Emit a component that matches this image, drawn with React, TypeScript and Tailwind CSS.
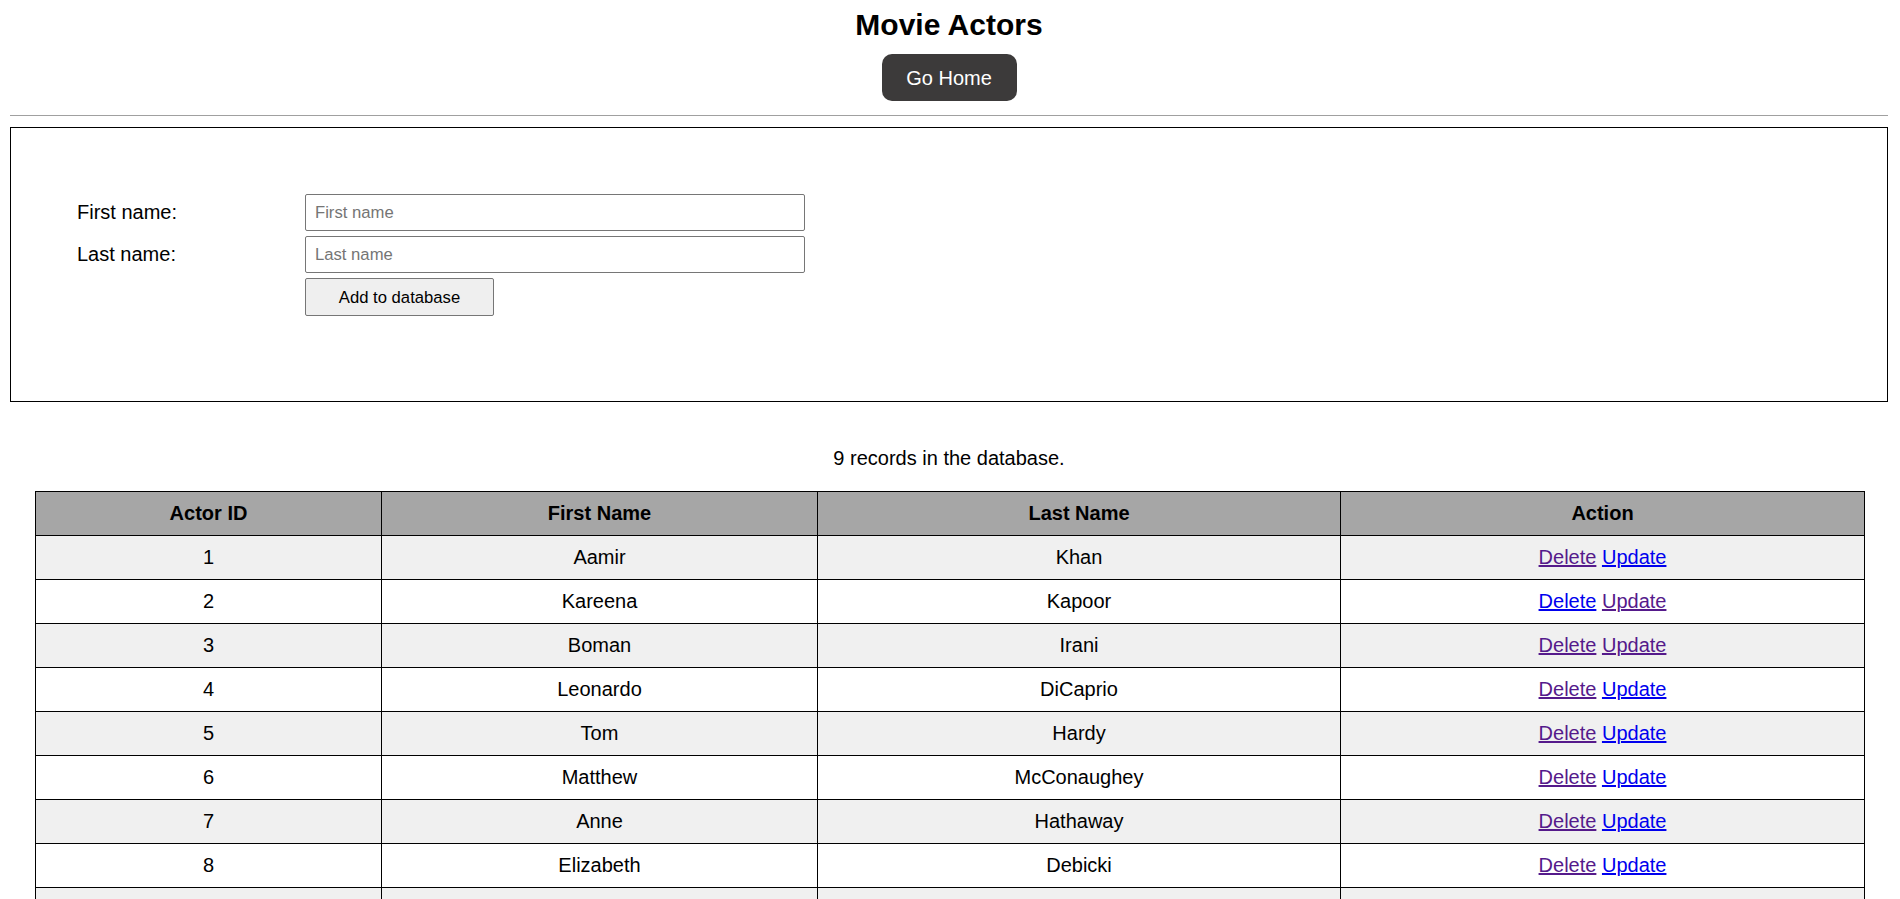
type Actor = {
  id: number;
  first: string;
  last: string;
  deleteVisited: boolean;
  updateVisited: boolean;
};

const actors: Actor[] = [
  { id: 1, first: 'Aamir', last: 'Khan', deleteVisited: true, updateVisited: false },
  { id: 2, first: 'Kareena', last: 'Kapoor', deleteVisited: false, updateVisited: true },
  { id: 3, first: 'Boman', last: 'Irani', deleteVisited: true, updateVisited: true },
  { id: 4, first: 'Leonardo', last: 'DiCaprio', deleteVisited: true, updateVisited: false },
  { id: 5, first: 'Tom', last: 'Hardy', deleteVisited: true, updateVisited: false },
  { id: 6, first: 'Matthew', last: 'McConaughey', deleteVisited: true, updateVisited: false },
  { id: 7, first: 'Anne', last: 'Hathaway', deleteVisited: true, updateVisited: false },
  { id: 8, first: 'Elizabeth', last: 'Debicki', deleteVisited: true, updateVisited: false },
  { id: 9, first: 'Margot', last: 'Robbie', deleteVisited: true, updateVisited: false },
];

function ActorForm() {
  return (
    <div className="mt-[11px] border border-black pt-[66px] pb-[85px] pl-[66px]">
      <div className="grid grid-cols-[228px_500px] gap-y-[5px] items-center">
        <label className="text-[20px] leading-[23px]">First name:</label>
        <input
          placeholder="First name"
          className="h-[37px] w-[500px] rounded-[2px] border border-[#767676] px-[9px] text-[16.67px] placeholder:text-[#757575] outline-none"
        />
        <label className="text-[20px] leading-[23px]">Last name:</label>
        <input
          placeholder="Last name"
          className="h-[37px] w-[500px] rounded-[2px] border border-[#767676] px-[9px] text-[16.67px] placeholder:text-[#757575] outline-none"
        />
        <div />
        <button className="h-[38px] w-[189px] rounded-[2px] border border-[#767676] bg-[#efefef] text-[16.67px] text-black">
          Add to database
        </button>
      </div>
    </div>
  );
}

function ActorTable() {
  const cell = 'border border-black py-[10px] text-center text-[20px] leading-[23px]';
  return (
    <table className="ml-[25px] w-[1829px] table-fixed border-collapse">
      <colgroup>
        <col className="w-[346px]" />
        <col className="w-[436px]" />
        <col className="w-[523px]" />
        <col className="w-[524px]" />
      </colgroup>
      <thead>
        <tr className="bg-[#a6a6a6]">
          <th className={`${cell} font-bold`}>Actor ID</th>
          <th className={`${cell} font-bold`}>First Name</th>
          <th className={`${cell} font-bold`}>Last Name</th>
          <th className={`${cell} font-bold`}>Action</th>
        </tr>
      </thead>
      <tbody>
        {actors.map((a, i) => (
          <tr key={a.id} className={i % 2 === 0 ? 'bg-[#f0f0f0]' : 'bg-white'}>
            <td className={cell}>{a.id}</td>
            <td className={cell}>{a.first}</td>
            <td className={cell}>{a.last}</td>
            <td className={cell}>
              <a href="#" className={a.deleteVisited ? 'underline text-[#551a8b]' : 'underline text-[#0000ee]'}>
                Delete
              </a>{' '}
              <a href="#" className={a.updateVisited ? 'underline text-[#551a8b]' : 'underline text-[#0000ee]'}>
                Update
              </a>
            </td>
          </tr>
        ))}
      </tbody>
    </table>
  );
}

export default function App() {
  return (
    <div className="min-h-screen bg-white text-black font-['Liberation_Sans',Arial,sans-serif]">
      <div className="mx-[10px] w-[1878px]">
        <div className="flex flex-col items-center pt-[7px]">
          <h1 className="text-[30px] font-bold leading-[36px]">Movie Actors</h1>
          <button className="mt-[11px] flex h-[47px] w-[135px] items-center justify-center rounded-[10px] bg-[#3c3a3a] text-[20px] text-white">
            Go Home
          </button>
        </div>
        <div className="mt-[14px] h-px bg-[#a0a0a0]" />
        <ActorForm />
        <p className="mt-[45px] text-center text-[20px] leading-[23px]">9 records in the database.</p>
        <div className="mt-[21px]">
          <ActorTable />
        </div>
      </div>
    </div>
  );
}
